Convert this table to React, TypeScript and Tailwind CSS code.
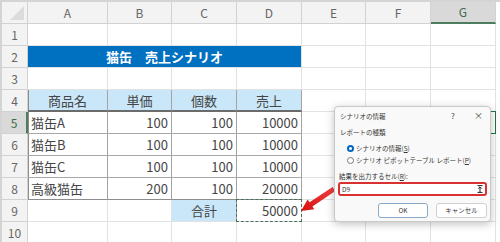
import React from "react";

const COLS = ["A", "B", "C", "D", "E", "F", "G"];

type Cell = { text?: string; align?: "l" | "c" | "r"; cls?: string };

const LB = "bg-[#c9e7f8]";

function cellFor(r: number, c: number): Cell {
  const inTable = r >= 4 && r <= 8 && c <= 3;
  const data: Record<number, string[]> = {
    4: ["商品名", "単価", "個数", "売上"],
    5: ["猫缶A", "100", "100", "10000"],
    6: ["猫缶B", "100", "100", "10000"],
    7: ["猫缶C", "100", "100", "10000"],
    8: ["高級猫缶", "200", "100", "20000"],
  };
  if (inTable) {
    const text = data[r][c];
    let cls = "border-r border-b border-r-[#a3a3a3] border-b-[#a8a8a8]";
    if (r === 4) cls = `border-r border-b-2 border-r-[#a3a3a3] border-b-[#6b6b6b] ${LB}`;
    if (r === 8) cls = "border-r border-b border-r-[#a3a3a3] border-b-[#8d8d8d]";
    if (c === 0) cls += " shadow-[inset_1px_0_0_#8d8d8d]";
    const align = r === 4 ? "c" : c === 0 ? "l" : "r";
    return { text, align, cls };
  }
  if (r === 9 && c === 2)
    return { text: "合計", align: "c", cls: `border-r border-b border-r-[#a3a3a3] border-b-[#e2e2e2] ${LB}` };
  if (r === 9 && c === 3)
    return { text: "50000", align: "r", cls: "border-r border-b border-[#e2e2e2] relative" };
  return { cls: "border-r border-b border-[#e2e2e2]" };
}

export default function App() {
  const rows = Array.from({ length: 10 }, (_, i) => i + 1);
  return (
    <div className="relative w-[500px] h-[242px] overflow-hidden bg-[#d4d4d4] pl-[2px] pt-[2px] font-['Noto_Sans_CJK_JP','Noto_Sans',sans-serif]">
      <div className="grid grid-cols-[26px_80px_64px_65px_65px_64px_65px_65px] grid-rows-[22px_repeat(10,22px)] bg-white">
        <div className="relative bg-[#f3f3f3] border-r border-b border-[#d2d2d2]">
          <div className="absolute right-[3px] bottom-[3px] w-0 h-0 border-l-[14px] border-l-transparent border-b-[14px] border-b-[#dcdcdc]" />
        </div>
        {COLS.map((c) => (
          <div
            key={c}
            className={
              c === "G"
                ? "flex items-center justify-center bg-[#d9d9d9] border-r border-b-2 border-r-[#d2d2d2] border-b-[#4d7d5e] text-[12px] text-[#3d6b4e]"
                : "flex items-center justify-center bg-[#f3f3f3] border-r border-b border-[#d2d2d2] text-[12px] text-[#666]"
            }
          >
            {c}
          </div>
        ))}
        {rows.map((r) => (
          <React.Fragment key={r}>
            <div
              className={
                r === 5
                  ? "flex items-center justify-center bg-[#d9d9d9] border-r-2 border-b border-r-[#4d7d5e] border-b-[#d2d2d2] text-[12px] text-[#3d6b4e]"
                  : "flex items-center justify-center bg-[#f3f3f3] border-r border-b border-[#d2d2d2] text-[12px] text-[#666]"
              }
            >
              {r}
            </div>
            {r === 2 ? (
              <>
                <div className="col-span-4 flex items-center justify-center bg-[#0070c0] border-r border-b border-[#e2e2e2] text-[13px] font-bold text-white leading-none">
                  猫缶　売上シナリオ
                </div>
                {[4, 5, 6].map((c) => (
                  <div key={c} className="border-r border-b border-[#e2e2e2]" />
                ))}
              </>
            ) : (
              COLS.map((_, c) => {
                const cell = cellFor(r, c);
                const just =
                  cell.align === "r" ? "justify-end pr-[3px]" : cell.align === "c" ? "justify-center" : "justify-start pl-[3px]";
                return (
                  <div
                    key={c}
                    className={`relative flex items-center ${just} text-[13px] leading-none text-[#454545] ${cell.cls ?? ""}`}
                  >
                    {cell.text}
                    {r === 9 && c === 3 && (
                      <div className="absolute inset-[-1px] border-[1.5px] border-dashed border-[#4b6f58]" />
                    )}
                    {r === 5 && c === 6 && (
                      <div className="absolute inset-[-1px] border-[1.5px] border-[#217346]" />
                    )}
                  </div>
                );
              })
            )}
          </React.Fragment>
        ))}
      </div>

      <svg className="absolute left-0 top-0" width="500" height="242" viewBox="0 0 500 242">
        <defs>
          <linearGradient id="ag" x1="1" y1="0" x2="0" y2="1">
            <stop offset="0" stopColor="#f04040" />
            <stop offset="1" stopColor="#d81010" />
          </linearGradient>
        </defs>
        <polygon
          points="301,211 314.3,209.3 312.4,206.4 335.4,191.1 332.6,186.9 309.6,202.3 307.6,199.4"
          fill="url(#ag)"
        />
      </svg>

      <div className="absolute left-[334px] top-[106px] w-[157px] h-[116px] bg-[#f9f9f9] border border-[#c8c8c8] rounded-[4px] shadow-[0_2px_8px_rgba(0,0,0,0.25)] text-[6.5px] text-[#333] leading-none flex flex-col">
        <div className="relative h-[18px] flex items-center pl-[5px]">
          <span>シナリオの情報</span>
          <span className="absolute left-[116px] top-[5px] text-[8px] text-[#444]">?</span>
          <span className="absolute left-[139px] top-[4px] text-[9px] text-[#444]">×</span>
        </div>
        <div className="h-[14px] flex items-center pl-[5px]">レポートの種類</div>
        <div className="mt-[3px] h-[12px] flex items-center pl-[12px] gap-[2px]">
          <span className="w-[7px] h-[7px] rounded-full bg-[#0067c0] flex items-center justify-center">
            <span className="w-[3px] h-[3px] rounded-full bg-white" />
          </span>
          <span>シナリオの情報(<span className="underline">S</span>)</span>
        </div>
        <div className="h-[12px] flex items-center pl-[12px] gap-[2px]">
          <span className="w-[7px] h-[7px] rounded-full border border-[#777] bg-white" />
          <span>シナリオ ピボットテーブル レポート(<span className="underline">P</span>)</span>
        </div>
        <div className="mt-[4px] h-[12px] flex items-center pl-[4px]">
          結果を出力するセル(<span className="underline">R</span>):
        </div>
        <div className="mx-[3px] h-[14px] flex items-center bg-white border-2 border-[#d93030] rounded-[3px] px-[2px]">
          <span className="text-[6.5px]">D9</span>
          <svg className="ml-auto" width="6" height="8" viewBox="0 0 6 8">
            <path d="M0.5 0.6 H5.5 M3 7.2 V2 M1.2 3.6 L3 1.8 L4.8 3.6 M0.5 7.4 H5.5" stroke="#222" strokeWidth="1" fill="none" />
          </svg>
        </div>
        <div className="mt-[7px] h-[15px] flex gap-[8px] pl-[43px] pr-[3px]">
          <div className="w-[50px] flex items-center justify-center bg-white border border-[#8aa9c8] rounded-[3px]">OK</div>
          <div className="flex-1 flex items-center justify-center bg-white border border-[#d0d0d0] rounded-[3px]">キャンセル</div>
        </div>
      </div>
    </div>
  );
}
